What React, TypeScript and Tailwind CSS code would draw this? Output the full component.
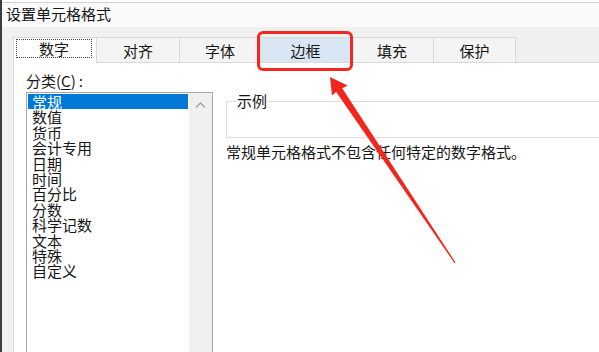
import React from "react";

const tabs = [
  { label: "数字", w: "w-[83px]" },
  { label: "对齐", w: "w-[83px]" },
  { label: "字体", w: "w-[81px]" },
  { label: "边框", w: "w-[90px]" },
  { label: "填充", w: "w-[83px]" },
  { label: "保护", w: "w-[83px]" },
];

const categories = [
  "常规",
  "数值",
  "货币",
  "会计专用",
  "日期",
  "时间",
  "百分比",
  "分数",
  "科学记数",
  "文本",
  "特殊",
  "自定义",
];

export default function App() {
  return (
    <div className="relative w-[599px] h-[352px] overflow-hidden flex bg-[#f0f0f0] text-[15px] text-[#161616] font-['Noto_Sans_CJK_SC','Noto_Sans_CJK_JP',sans-serif]">
      {/* window edge */}
      <div className="w-[2px] bg-[#3d3d3d]" />

      <div className="flex-1 flex flex-col">
        {/* title bar */}
        <div className="h-[2px] bg-white" />
        <div className="h-px bg-[#d2d2d2]" />
        <div className="h-[24px] bg-[#fafafa] pl-[4px] leading-[21px]">设置单元格格式</div>

        {/* tab strip */}
        <div className="pt-[10px] pl-[11px] flex">
          {tabs.map((t, i) => {
            if (i === 0)
              return (
                <div
                  key={t.label}
                  className={`${t.w} h-[26px] -mb-px relative z-10 bg-white border-t border-l border-[#d9d9d9] pt-[1px] pl-[2px] pr-[4px] pb-[5px] flex`}
                >
                  <div className="flex-1 border border-dotted border-[#444] flex items-center justify-center leading-none">
                    {t.label}
                  </div>
                </div>
              );
            const hot = t.label === "边框";
            return (
              <div
                key={t.label}
                className={`${t.w} h-[25px] border-t border-l ${i === tabs.length - 1 ? "border-r" : ""} border-[#d9d9d9] flex items-center justify-center leading-none ${hot ? "bg-[#d9e7f4]" : "bg-[#f4f4f4]"}`}
              >
                {t.label}
              </div>
            );
          })}
        </div>

        {/* page */}
        <div className="ml-[11px] flex-1 bg-white border-t border-l border-[#d9d9d9] flex pl-[12px] pt-[9px]">
          <div className="w-[187px] flex flex-col">
            <div className="h-[18px] leading-[18px] whitespace-nowrap">
              分类(<span className="underline underline-offset-2">C</span>)<span className="ml-[3px]">:</span>
            </div>
            <div className="mt-[2px] flex-1 flex border-t border-l border-r border-[#a6a6b2]">
              <div className="flex-1 pt-[1px] px-px">
                {categories.map((c, i) => (
                  <div
                    key={c}
                    className={`h-[15.4px] leading-[15.4px] pl-[4px] whitespace-nowrap ${i === 0 ? "bg-[#0078d7] text-white" : ""}`}
                  >
                    {c}
                  </div>
                ))}
              </div>
              <div className="w-[23px] bg-[#f0f0f0] flex justify-center pt-[9px]">
                <svg width="11" height="6" viewBox="0 0 11 6">
                  <path d="M1 5.5 L5.5 1 L10 5.5" fill="none" stroke="#a0a0a0" strokeWidth="1.3" />
                </svg>
              </div>
            </div>
          </div>

          <div className="ml-[13px] flex-1 flex flex-col">
            <div className="relative mt-[29px] h-[37px] border border-r-0 border-[#dcdcdc]">
              <span className="absolute left-[9px] -top-[9px] bg-white px-px leading-[16px]">示例</span>
            </div>
            <div className="mt-[5px] leading-[18px] whitespace-nowrap">常规单元格格式不包含任何特定的数字格式。</div>
          </div>
        </div>
      </div>

      {/* annotation overlay */}
      <div className="absolute left-[257px] top-[31px] w-[96px] h-[40px] border-[3px] border-[#f0281f] rounded-[6px] pointer-events-none" />
      <svg className="absolute inset-0 pointer-events-none" width="599" height="352" viewBox="0 0 599 352">
        <polygon
          points="330,77 347.5,85.5 342.2,88.3 455.6,262.6 454.6,263.2 336.2,92 332,95.5"
          fill="#f3261b"
        />
      </svg>
    </div>
  );
}
